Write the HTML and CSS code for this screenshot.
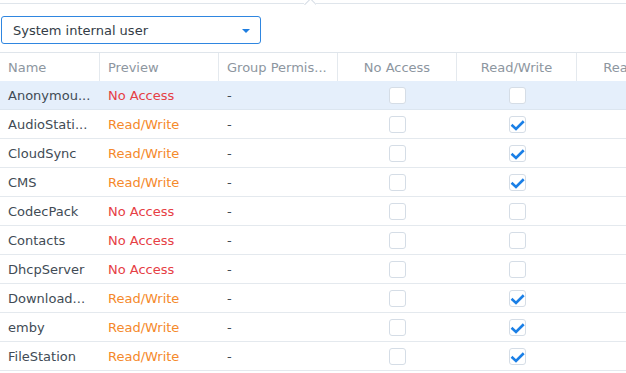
FILE: index.html
```html
<!DOCTYPE html>
<html>
<head>
<meta charset="utf-8">
<link rel="stylesheet" href="styles.css">
</head>
<body>
<div class="page">
  <div class="tabline"><span class="caret"></span></div>
  <div class="select">
    <span class="select-text">System internal user</span>
    <span class="select-arrow"></span>
  </div>
  <div class="grid">
    <div class="row head">
      <div class="cell">Name</div>
      <div class="cell">Preview</div>
      <div class="cell">Group Permis...</div>
      <div class="cell center">No Access</div>
      <div class="cell center">Read/Write</div>
      <div class="cell center">Read Only</div>
    </div>
    <div class="row selected">
      <div class="cell">Anonymou...</div>
      <div class="cell no">No Access</div>
      <div class="cell">-</div>
      <div class="cell center"><span class="cb"></span></div>
      <div class="cell center"><span class="cb"></span></div>
      <div class="cell center"></div>
    </div>
    <div class="row">
      <div class="cell">AudioStati...</div>
      <div class="cell rw">Read/Write</div>
      <div class="cell">-</div>
      <div class="cell center"><span class="cb"></span></div>
      <div class="cell center"><span class="cb"><svg viewBox="0 0 17 17"><path d="M3.5 9.6 L7 13 L13.8 6.2"/></svg></span></div>
      <div class="cell center"></div>
    </div>
    <div class="row">
      <div class="cell">CloudSync</div>
      <div class="cell rw">Read/Write</div>
      <div class="cell">-</div>
      <div class="cell center"><span class="cb"></span></div>
      <div class="cell center"><span class="cb"><svg viewBox="0 0 17 17"><path d="M3.5 9.6 L7 13 L13.8 6.2"/></svg></span></div>
      <div class="cell center"></div>
    </div>
    <div class="row">
      <div class="cell">CMS</div>
      <div class="cell rw">Read/Write</div>
      <div class="cell">-</div>
      <div class="cell center"><span class="cb"></span></div>
      <div class="cell center"><span class="cb"><svg viewBox="0 0 17 17"><path d="M3.5 9.6 L7 13 L13.8 6.2"/></svg></span></div>
      <div class="cell center"></div>
    </div>
    <div class="row">
      <div class="cell">CodecPack</div>
      <div class="cell no">No Access</div>
      <div class="cell">-</div>
      <div class="cell center"><span class="cb"></span></div>
      <div class="cell center"><span class="cb"></span></div>
      <div class="cell center"></div>
    </div>
    <div class="row">
      <div class="cell">Contacts</div>
      <div class="cell no">No Access</div>
      <div class="cell">-</div>
      <div class="cell center"><span class="cb"></span></div>
      <div class="cell center"><span class="cb"></span></div>
      <div class="cell center"></div>
    </div>
    <div class="row">
      <div class="cell">DhcpServer</div>
      <div class="cell no">No Access</div>
      <div class="cell">-</div>
      <div class="cell center"><span class="cb"></span></div>
      <div class="cell center"><span class="cb"></span></div>
      <div class="cell center"></div>
    </div>
    <div class="row">
      <div class="cell">Download...</div>
      <div class="cell rw">Read/Write</div>
      <div class="cell">-</div>
      <div class="cell center"><span class="cb"></span></div>
      <div class="cell center"><span class="cb"><svg viewBox="0 0 17 17"><path d="M3.5 9.6 L7 13 L13.8 6.2"/></svg></span></div>
      <div class="cell center"></div>
    </div>
    <div class="row">
      <div class="cell">emby</div>
      <div class="cell rw">Read/Write</div>
      <div class="cell">-</div>
      <div class="cell center"><span class="cb"></span></div>
      <div class="cell center"><span class="cb"><svg viewBox="0 0 17 17"><path d="M3.5 9.6 L7 13 L13.8 6.2"/></svg></span></div>
      <div class="cell center"></div>
    </div>
    <div class="row">
      <div class="cell">FileStation</div>
      <div class="cell rw">Read/Write</div>
      <div class="cell">-</div>
      <div class="cell center"><span class="cb"></span></div>
      <div class="cell center"><span class="cb"><svg viewBox="0 0 17 17"><path d="M3.5 9.6 L7 13 L13.8 6.2"/></svg></span></div>
      <div class="cell center"></div>
    </div>
  </div>
</div>
</body>
</html>
```
FILE: styles.css
```css
html, body {
  margin: 0;
  padding: 0;
  background: #ffffff;
}
.page {
  width: 626px;
  height: 373px;
  overflow: hidden;
  font-family: "DejaVu Sans", Verdana, sans-serif;
  font-size: 13px;
  color: #414b55;
}
.tabline {
  position: relative;
  height: 3px;
  border-bottom: 1px solid #dfe5eb;
}
.caret {
  position: absolute;
  left: 304px;
  top: -1px;
  width: 12px;
  height: 6px;
  background: #ffffff;
  overflow: hidden;
}
.caret::before {
  content: "";
  position: absolute;
  left: 1.5px;
  top: 1px;
  width: 8px;
  height: 8px;
  border-left: 1px solid #d6dde5;
  border-top: 1px solid #d6dde5;
  transform: rotate(45deg);
  transform-origin: center;
  background: #fff;
}
.select {
  margin: 12px 0 0 1px;
  height: 26px;
  border: 1px solid #2f86e0;
  border-radius: 3px;
  display: flex;
  align-items: center;
  justify-content: space-between;
  padding: 0 10px 0 11px;
  box-sizing: content-box;
  width: 237px;
}
.select-text {
  color: #333c46;
}
.select-arrow {
  width: 0;
  height: 0;
  border-left: 4px solid transparent;
  border-right: 4px solid transparent;
  border-top: 4px solid #1f7ee0;
  margin-top: 1px;
}
.grid {
  margin-top: 8px;
  border-top: 1px solid #dfe5eb;
}
.row {
  display: grid;
  grid-template-columns: 100px 119px 119px 119px 120px 120px;
  height: 29px;
  box-sizing: border-box;
  border-bottom: 1px solid #e4e9ee;
  width: 697px;
}
.row.head {
  height: 28px;
  border-bottom: none;
  color: #8d96a0;
}
.row.head .cell {
  border-right: 1px solid #e4e9ee;
}
.row.selected {
  background: #e5effb;
  border-bottom-color: #dce6f0;
}
.cell {
  display: flex;
  align-items: center;
  padding: 0 8px;
  white-space: nowrap;
  overflow: hidden;
  min-width: 0;
}
.cell.center {
  justify-content: center;
  padding: 0;
}
.no {
  color: #e64045;
}
.rw {
  color: #f5892b;
}
.cb {
  display: block;
  width: 15px;
  height: 15px;
  border: 1px solid #d5dde6;
  border-radius: 3px;
  background: #ffffff;
  position: relative;
}
.cb svg {
  position: absolute;
  left: -1px;
  top: -1px;
  width: 17px;
  height: 17px;
}
.cb path {
  fill: none;
  stroke: #1a7fe6;
  stroke-width: 2.6;
  stroke-linecap: square;
  stroke-linejoin: miter;
}
```
